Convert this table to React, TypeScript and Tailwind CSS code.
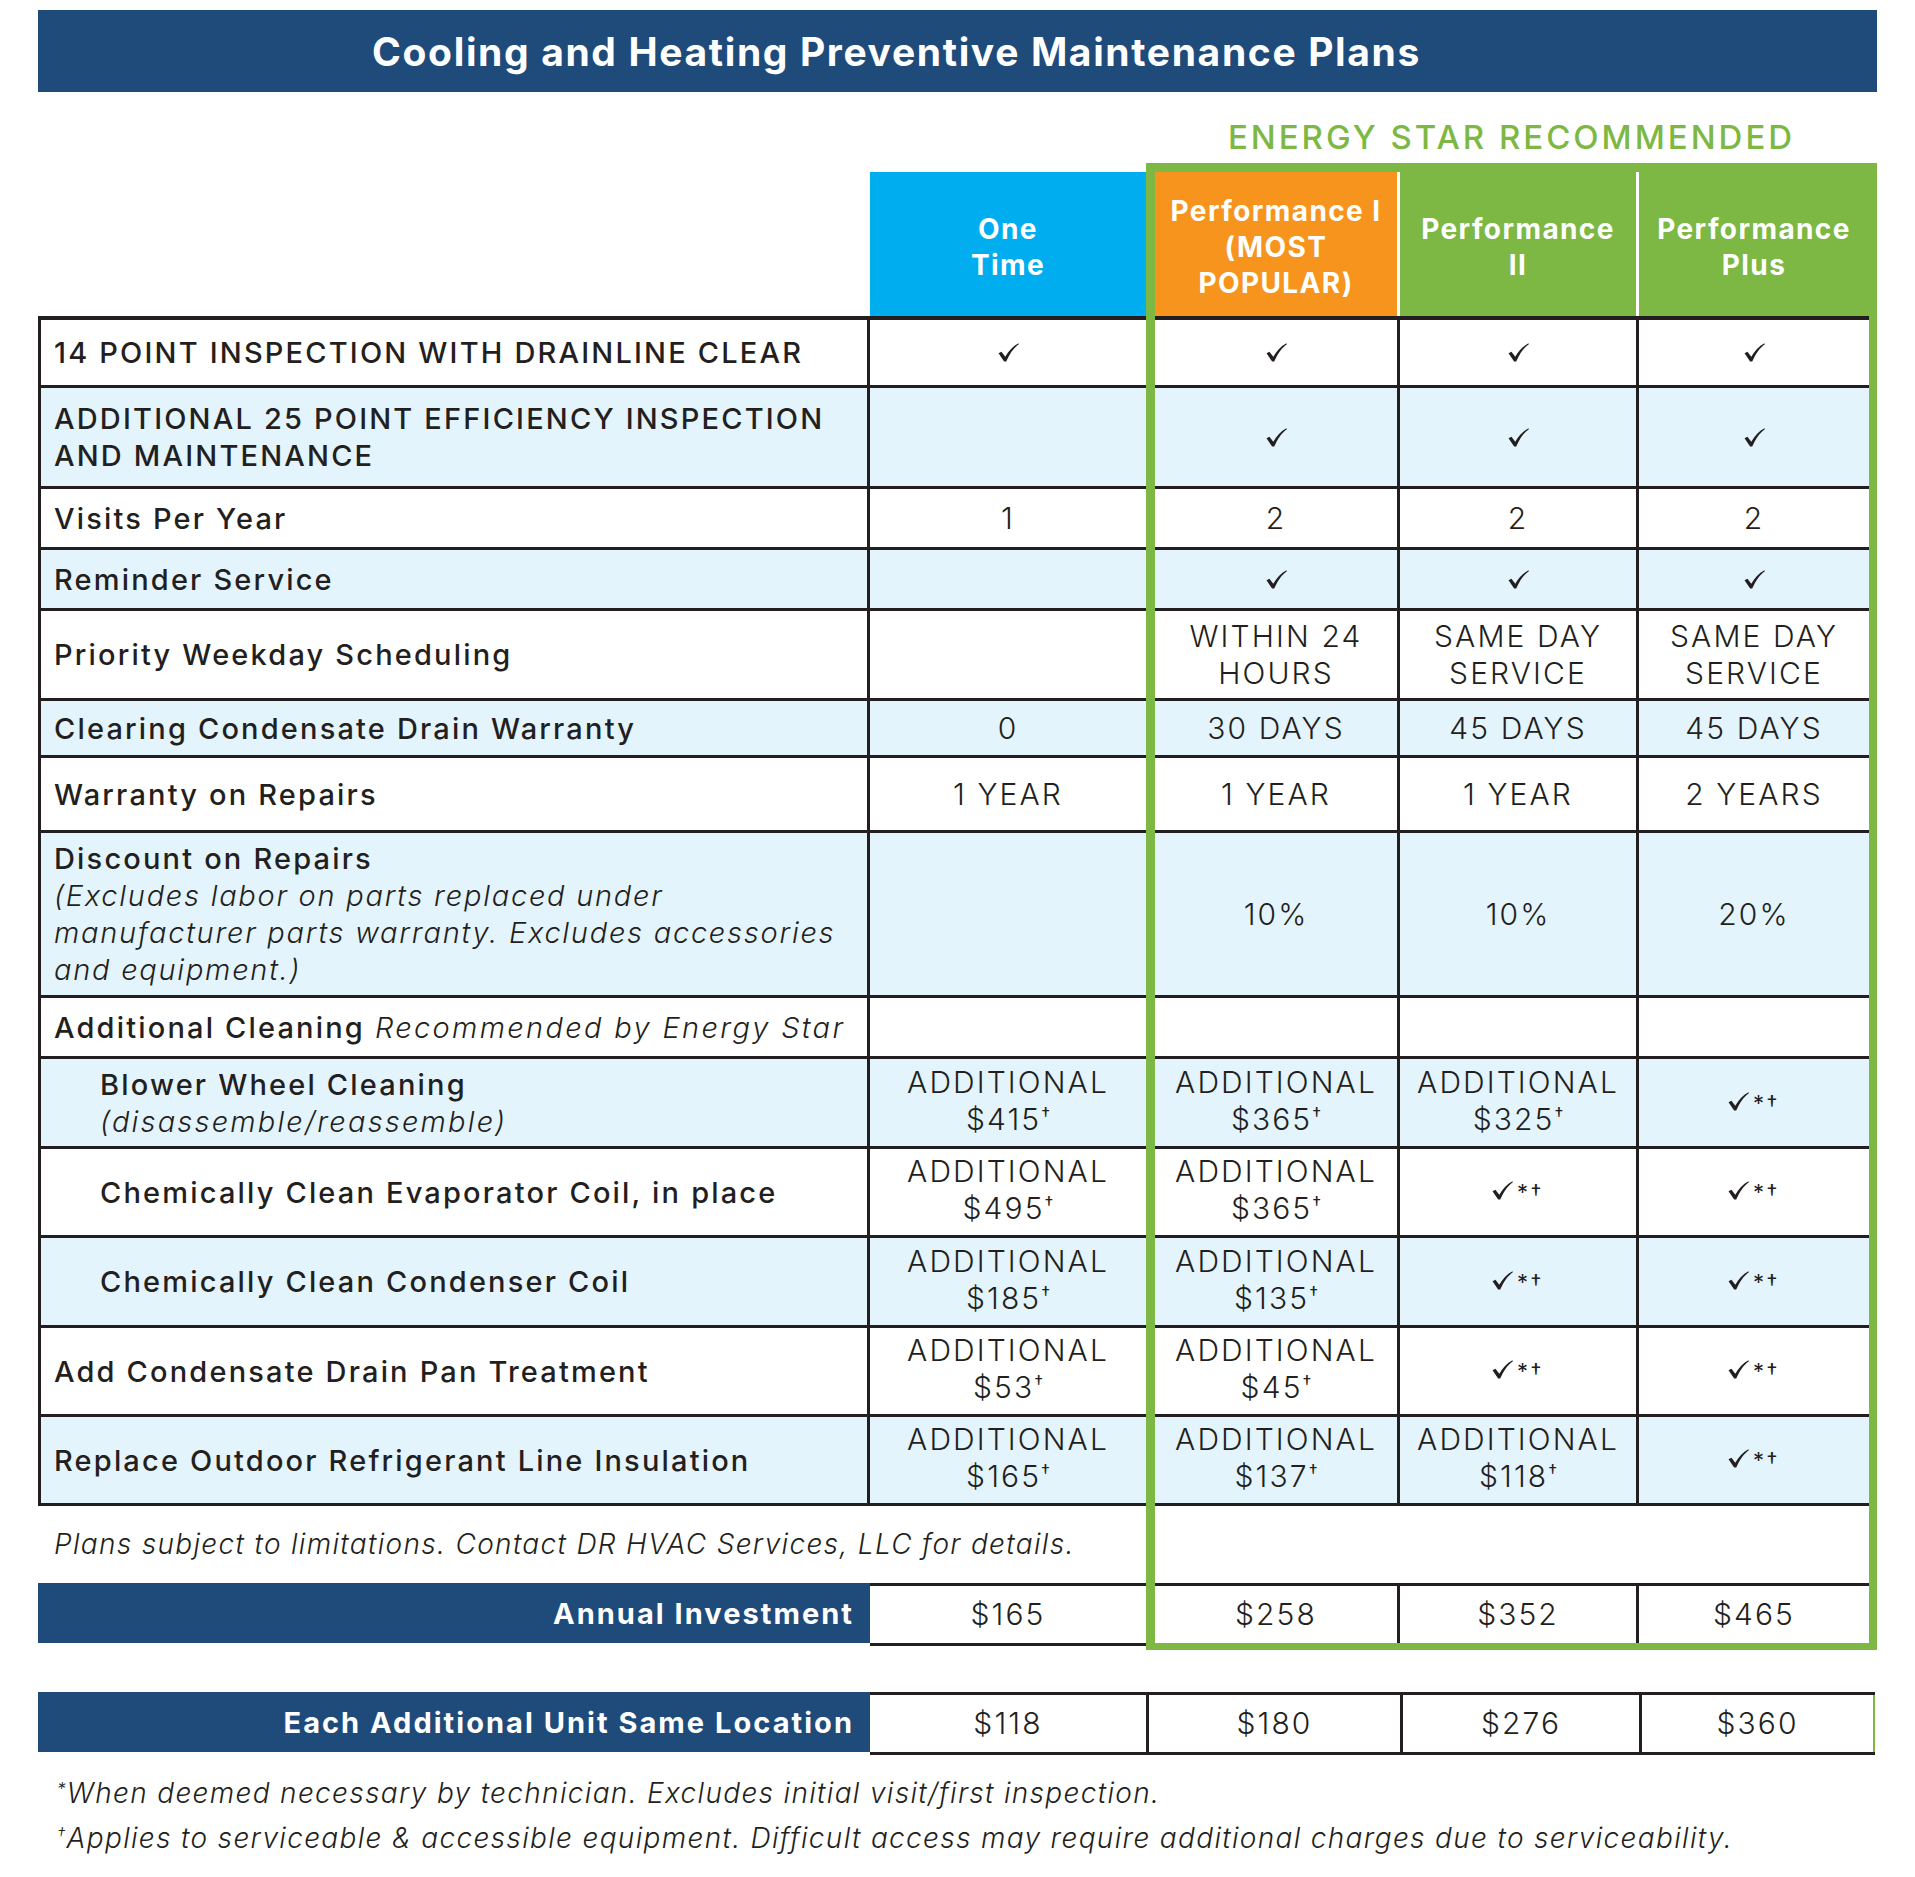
import type React from "react"

type Row = {
  label: React.ReactNode
  h: string
  shade?: boolean
  indent?: boolean
  vals: React.ReactNode[]
}

const Check = () => (
  <svg width="21" height="19" viewBox="0 0 22 20" className="shrink-0">
    <path
      d="M0.5 10.8 L3.6 9.2 L7.6 14.6 C11 8.5 15.5 3.5 21.5 0.3 L21.9 1.2 C16.5 5 12 11.5 8.6 19.6 L6.4 19.6 Z"
      fill="#231f20"
    />
  </svg>
)

const CheckMark = () => (
  <span className="inline-flex items-start">
    <Check />
    <span className="text-[22px] font-normal leading-none tracking-[0.12em] ml-[4px]">*†</span>
  </span>
)

const Add = ({ price }: { price: string }) => (
  <span>
    ADDITIONAL
    <br />${price}
    <span className="relative -top-[9px] text-[18px] font-normal tracking-normal">†</span>
  </span>
)

const rows: Row[] = [
  { label: "14 POINT INSPECTION WITH DRAINLINE CLEAR", h: "h-[72px]", vals: [<Check />, <Check />, <Check />, <Check />] },
  {
    label: (
      <span>
        ADDITIONAL 25 POINT EFFICIENCY INSPECTION
        <br />
        AND MAINTENANCE
      </span>
    ),
    h: "h-[101px]",
    shade: true,
    vals: ["", <Check />, <Check />, <Check />],
  },
  { label: "Visits Per Year", h: "h-[61px]", vals: ["1", "2", "2", "2"] },
  { label: "Reminder Service", h: "h-[61px]", shade: true, vals: ["", <Check />, <Check />, <Check />] },
  {
    label: "Priority Weekday Scheduling",
    h: "h-[90px]",
    vals: [
      "",
      <span>WITHIN 24<br />HOURS</span>,
      <span>SAME DAY<br />SERVICE</span>,
      <span>SAME DAY<br />SERVICE</span>,
    ],
  },
  { label: "Clearing Condensate Drain Warranty", h: "h-[57px]", shade: true, vals: ["0", "30 DAYS", "45 DAYS", "45 DAYS"] },
  { label: "Warranty on Repairs", h: "h-[75px]", vals: ["1 YEAR", "1 YEAR", "1 YEAR", "2 YEARS"] },
  {
    label: (
      <div>
        <div>Discount on Repairs</div>
        <div className="font-light italic tracking-[0.06em]">
          (Excludes labor on parts replaced under
          <br />
          manufacturer parts warranty. Excludes accessories
          <br />
          and equipment.)
        </div>
      </div>
    ),
    h: "h-[165px]",
    shade: true,
    vals: ["", "10%", "10%", "20%"],
  },
  {
    label: (
      <span>
        Additional Cleaning <span className="font-light italic tracking-[0.08em]">Recommended by Energy Star</span>
      </span>
    ),
    h: "h-[61px]",
    vals: ["", "", "", ""],
  },
  {
    label: (
      <div>
        <div>Blower Wheel Cleaning</div>
        <div className="font-light italic">(disassemble/reassemble)</div>
      </div>
    ),
    h: "h-[90px]",
    shade: true,
    indent: true,
    vals: [<Add price="415" />, <Add price="365" />, <Add price="325" />, <CheckMark />],
  },
  {
    label: "Chemically Clean Evaporator Coil, in place",
    h: "h-[89px]",
    indent: true,
    vals: [<Add price="495" />, <Add price="365" />, <CheckMark />, <CheckMark />],
  },
  {
    label: "Chemically Clean Condenser Coil",
    h: "h-[90px]",
    shade: true,
    indent: true,
    vals: [<Add price="185" />, <Add price="135" />, <CheckMark />, <CheckMark />],
  },
  {
    label: "Add Condensate Drain Pan Treatment",
    h: "h-[89px]",
    vals: [<Add price="53" />, <Add price="45" />, <CheckMark />, <CheckMark />],
  },
  {
    label: "Replace Outdoor Refrigerant Line Insulation",
    h: "h-[89px]",
    shade: true,
    vals: [<Add price="165" />, <Add price="137" />, <Add price="118" />, <CheckMark />],
  },
]

function TableRow({ r, first }: { r: Row; first: boolean }) {
  const bg = r.shade ? "bg-[#e3f4fc]" : "bg-white"
  const top = first ? "border-t-[4px]" : ""
  const cell = `flex items-center justify-center text-center border-b-[3px] border-[#231f20] font-light text-[30px] tracking-[0.07em] ${bg} ${top}`
  return (
    <div className={`flex ${r.h}`}>
      <div
        className={`w-[832px] shrink-0 flex items-center border-l-[3px] border-r-[3px] border-b-[3px] border-[#231f20] font-[550] text-[29px] tracking-[0.075em] ${
          r.indent ? "pl-[59px]" : "pl-[13px]"
        } ${bg} ${top}`}
      >
        {r.label}
      </div>
      <div className={`w-[276px] shrink-0 ${cell}`}>{r.vals[0]}</div>
      <div className="w-[731px] shrink-0 flex border-l-[9px] border-r-[8px] border-[#7cb843]">
        <div className={`w-[245px] shrink-0 border-r-[3px] ${cell}`}>{r.vals[1]}</div>
        <div className={`w-[239px] shrink-0 border-r-[3px] ${cell}`}>{r.vals[2]}</div>
        <div className={`flex-1 ${cell}`}>{r.vals[3]}</div>
      </div>
    </div>
  )
}

export default function App() {
  return (
    <div className="w-[1915px] h-[1877px] bg-white pt-[10px] px-[38px] font-['Inter',sans-serif] text-[#231f20] text-[28px] leading-[37px]">
      {/* title */}
      <div className="h-[82px] bg-[#1f4b7b] flex items-center justify-center pr-[122px]">
        <h1 className="text-white font-bold text-[39px] tracking-[0.042em]">Cooling and Heating Preventive Maintenance Plans</h1>
      </div>

      {/* energy star label */}
      <div className="flex h-[71px]">
        <div className="w-[1108px] shrink-0" />
        <div className="w-[731px] flex items-end justify-center pb-[9px] text-[#7cb843] text-[33px] leading-[34px] font-medium tracking-[0.09em]">
          ENERGY STAR RECOMMENDED
        </div>
      </div>

      {/* header */}
      <div className="flex items-end h-[153px] text-white font-bold text-[28px] leading-[36px] tracking-[0.05em]">
        <div className="w-[832px] shrink-0" />
        <div className="w-[276px] shrink-0 h-[144px] pt-[5px] bg-[#00aeef] flex items-center justify-center text-center">
          <span>
            One
            <br />
            Time
          </span>
        </div>
        <div className="w-[731px] shrink-0 h-full flex border-t-[9px] border-l-[9px] border-r-[8px] border-[#7cb843]">
          <div className="w-[245px] shrink-0 pt-[5px] bg-[#f7941d] border-r-[3px] border-white flex items-center justify-center text-center">
            <span>
              Performance I
              <br />
              (MOST
              <br />
              POPULAR)
            </span>
          </div>
          <div className="w-[239px] shrink-0 pt-[5px] bg-[#7cb843] border-r-[3px] border-white flex items-center justify-center text-center">
            <span>
              Performance
              <br />
              II
            </span>
          </div>
          <div className="flex-1 pt-[5px] bg-[#7cb843] flex items-center justify-center text-center">
            <span>
              Performance
              <br />
              Plus
            </span>
          </div>
        </div>
      </div>

      {rows.map((r, i) => (
        <TableRow key={i} r={r} first={i === 0} />
      ))}

      {/* note row */}
      <div className="flex h-[77px]">
        <div className="w-[1108px] shrink-0 flex items-center pl-[16px] font-light italic tracking-[0.047em]">
          Plans subject to limitations. Contact DR HVAC Services, LLC for details.
        </div>
        <div className="w-[731px] shrink-0 border-l-[9px] border-r-[8px] border-[#7cb843]" />
      </div>

      {/* annual investment */}
      <div className="flex items-start">
        <div className="w-[832px] shrink-0 h-[60px] bg-[#1f4b7b] flex items-center justify-end pr-[16px] text-white font-bold text-[29px] tracking-[0.07em]">
          Annual Investment
        </div>
        <div className="w-[276px] shrink-0 h-[63px] border-y-[3px] border-[#231f20] flex items-center justify-center font-light text-[30px] tracking-[0.07em]">
          $165
        </div>
        <div className="w-[731px] shrink-0 h-[67px] flex border-l-[9px] border-r-[8px] border-b-[7px] border-[#7cb843] font-light text-[30px] tracking-[0.07em]">
          <div className="w-[245px] shrink-0 border-t-[3px] border-r-[3px] border-[#231f20] flex items-center justify-center">$258</div>
          <div className="w-[239px] shrink-0 border-t-[3px] border-r-[3px] border-[#231f20] flex items-center justify-center">$352</div>
          <div className="flex-1 border-t-[3px] border-[#231f20] flex items-center justify-center">$465</div>
        </div>
      </div>

      {/* each additional unit */}
      <div className="flex items-start mt-[42px]">
        <div className="w-[832px] shrink-0 h-[60px] bg-[#1f4b7b] flex items-center justify-end pr-[16px] text-white font-bold text-[29px] tracking-[0.07em]">
          Each Additional Unit Same Location
        </div>
        <div className="flex h-[63px] border-y-[3px] border-[#231f20] font-light text-[30px] tracking-[0.07em]">
          <div className="w-[279px] border-r-[3px] border-[#231f20] flex items-center justify-center">$118</div>
          <div className="w-[254px] border-r-[3px] border-[#231f20] flex items-center justify-center">$180</div>
          <div className="w-[239px] border-r-[3px] border-[#231f20] flex items-center justify-center">$276</div>
          <div className="w-[233px] border-r-[2px] border-r-[#7cb843] flex items-center justify-center">$360</div>
        </div>
      </div>

      {/* footnotes */}
      <div className="mt-[18px] pl-[19px] font-light italic leading-[41px] tracking-[0.047em]">
        <p>
          <span className="relative -top-[8px] text-[17px]">*</span>When deemed necessary by technician. Excludes initial visit/first inspection.
        </p>
        <p>
          <span className="relative -top-[8px] text-[17px]">†</span>Applies to serviceable &amp; accessible equipment. Difficult access may require additional charges due to serviceability.
        </p>
      </div>
    </div>
  )
}
